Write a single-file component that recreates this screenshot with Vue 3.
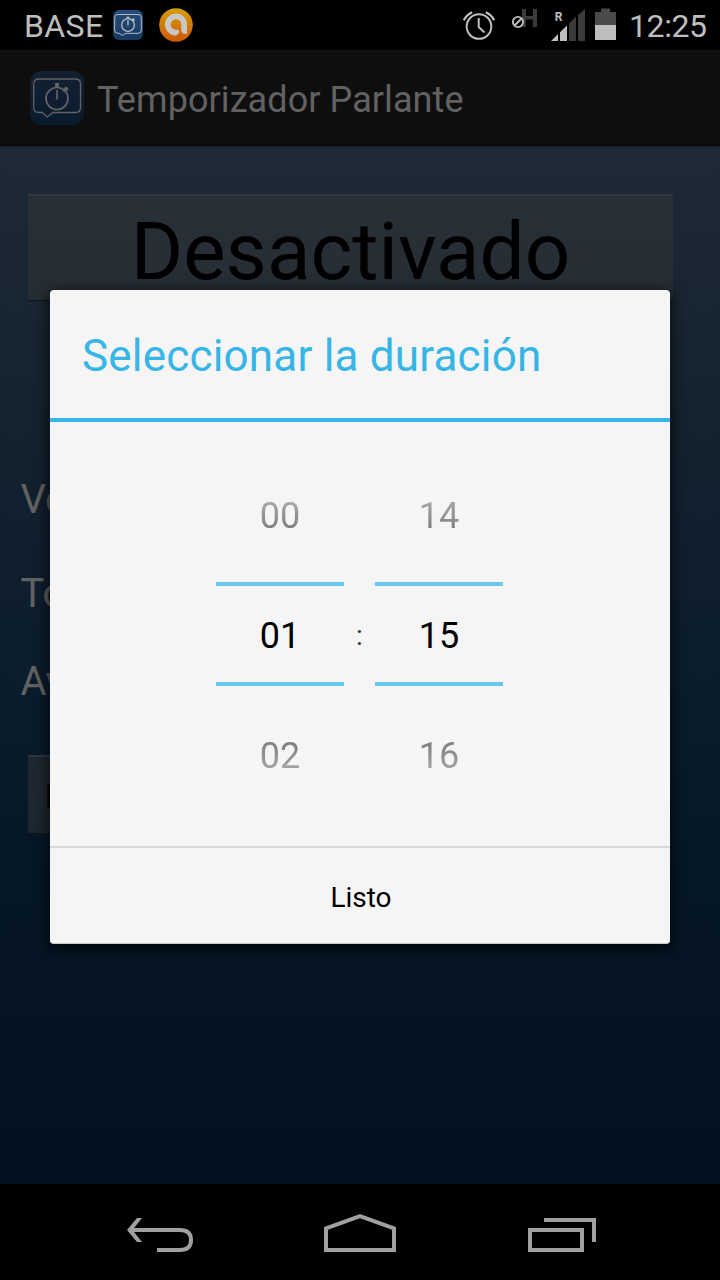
<script setup>
const settings = ['Vo', 'To', 'Av']
const wheels = [
  ['00', '01', '02'],
  ['14', '15', '16'],
]
</script>

<template>
  <div class="screen">
    <header class="status">
      <span class="carrier">BASE</span>
      <svg class="s-app" width="30" height="30" viewBox="0 0 54 54">
        <defs>
          <linearGradient id="blueS" x1="0" y1="0" x2="0" y2="1">
            <stop offset="0" stop-color="#264d77" />
            <stop offset="1" stop-color="#173a60" />
          </linearGradient>
        </defs>
        <rect width="54" height="54" rx="11" fill="url(#blueS)" />
        <g fill="none" stroke="#b3bcc5" stroke-width="1.8">
          <path d="M9 8H45Q51 8 51 14V36Q51 42 45 42H23L17 46L12 42H9Q3 42 3 36V14Q3 8 9 8Z" />
          <circle cx="27" cy="27" r="11.5" stroke-width="2.4" />
          <path d="M27 18V28" stroke-width="2.4" />
          <path d="M27 12V16" stroke-width="5" />
          <path d="M35 19L38 16" stroke-width="5" />
        </g>
      </svg>
      <svg class="s-avast" width="34" height="34" viewBox="0 0 34 34">
        <defs>
          <linearGradient id="orange" x1="0" y1="0" x2="0" y2="1">
            <stop offset="0" stop-color="#d7a000" />
            <stop offset="1" stop-color="#cd5700" />
          </linearGradient>
        </defs>
        <circle cx="17" cy="17" r="16.8" fill="url(#orange)" />
        <path d="M18.700 21.500A5.300 5.300 0 1 1 22.300 16.500V21.500Q22.300 25.700 26 25.700H28V16.500A11 11 0 1 0 16.500 27.500Q20.500 26 20 22.500Z" fill="#c8c8c8" />
      </svg>
      <span class="gap"></span>
      <svg class="s-right" width="173" height="50" viewBox="0 0 173 50">
        <g fill="none" stroke="#bebebe">
          <circle cx="23" cy="26.500" r="12.300" stroke-width="2" />
          <path d="M22.700 18V27L28.500 32.500" stroke-width="2" />
          <path d="M7.800 20.300Q10.500 14.800 16.200 12.200M38.200 20.300Q35.500 14.800 29.800 12.200" stroke-width="2.300" />
        </g>
        <path d="M66 9H70V16H77V9H81V27H77V19.500H70V27H66Z" fill="#3a3a3a" />
        <circle cx="62" cy="22" r="5.100" fill="#000" stroke="#bebebe" stroke-width="1.900" />
        <path d="M58.500 25.500L65.500 18.500" stroke="#bebebe" stroke-width="1.900" />
        <text x="98.700" y="21" class="roam">R</text>
        <path d="M95 41L102 34V41ZM104 32.200L111 25.500V41H104Z" fill="#bebebe" />
        <path d="M113 23.500L120 16.500V41H113ZM122 15L129 9V41H122Z" fill="#3a3a3a" />
        <path d="M139 12H145V8.500H154V12H160V25H139Z" fill="#4a4a4a" />
        <path d="M139 25H160V40H139Z" fill="#bebebe" />
      </svg>
      <span class="clock">12:25</span>
    </header>

    <div class="bar">
      <svg class="app-icon" width="54" height="54" viewBox="0 0 54 54">
        <defs>
          <linearGradient id="blueL" x1="0" y1="0" x2="0" y2="1">
            <stop offset="0" stop-color="#132131" />
            <stop offset="1" stop-color="#091b2f" />
          </linearGradient>
        </defs>
        <rect width="54" height="54" rx="12" fill="url(#blueL)" />
        <g fill="none" stroke="#626366">
          <path d="M9 8H45.500Q50.500 8 50.500 13V36.500Q50.500 41.500 45.500 41.500H23L17.300 46L12 41.500H9Q3.700 41.500 3.700 36.500V13Q3.700 8 9 8Z" stroke-width="1.300" />
          <circle cx="27" cy="27.500" r="11" stroke-width="1.700" />
          <path d="M27 19V28.500" stroke-width="1.700" />
          <path d="M27 12V16.500" stroke-width="4" />
          <path d="M33 20L36 18" stroke-width="2" />
          <circle cx="36.200" cy="18" r="1.800" fill="#626366" />
        </g>
      </svg>
      <h1>Temporizador Parlante</h1>
    </div>

    <main class="content">
      <div class="btn big"><span>Desactivado</span></div>
      <ul>
        <li v-for="s in settings" :key="s">{{ s }}</li>
      </ul>
      <div class="btn small">I</div>
    </main>

    <nav class="nav">
      <svg width="720" height="96" viewBox="0 0 720 96" fill="none" stroke="#a0a0a0" stroke-width="4">
        <path d="M129 46H180Q191 46 191 56Q191 66 180 66H157" />
        <path d="M127 46L137 34H142L132.500 46L142 58H137Z" fill="#a0a0a0" stroke="none" />
        <path d="M326 66V44.400L360 32.200L394 44.400V66Z" />
        <path d="M530 46H582V66H530ZM544 36H594V58" />
      </svg>
    </nav>

    <section class="dialog">
      <h2><span>Seleccionar la duración</span></h2>
      <div class="picker">
        <div v-for="(w, i) in wheels" :key="i" class="wheel">
          <span class="dim above">{{ w[0] }}</span>
          <span class="current">{{ w[1] }}</span>
          <span class="dim below">{{ w[2] }}</span>
        </div>
        <span class="colon">:</span>
      </div>
      <button>Listo</button>
    </section>
  </div>
</template>

<style>
body {
  margin: 0;
  background: #000;
}
</style>

<style scoped>
* {
  box-sizing: border-box;
}
.screen {
  position: relative;
  width: 720px;
  height: 1280px;
  display: grid;
  grid-template-rows: 50px 96px 1038px 96px;
  overflow: hidden;
  background: #000;
  font-family: Roboto, sans-serif;
}
.status {
  display: flex;
  align-items: center;
  color: #bebebe;
  font-size: 32px;
  padding-left: 24px;
}
.carrier {
  width: 89px;
  padding-top: 1px;
  letter-spacing: 0.4px;
}
.s-avast {
  margin-left: 16px;
}
.gap {
  flex: 1;
}
.clock {
  width: 91px;
  padding-top: 1px;
  letter-spacing: -0.4px;
  white-space: nowrap;
}
.roam {
  font: 700 12px Roboto, sans-serif;
  fill: #bebebe;
}
.bar {
  display: flex;
  align-items: center;
  background: #0e0e0e;
  border-top: 1px solid #151515;
  border-bottom: 3px solid #0a0a0a;
  padding: 2px 0 0 30px;
}
h1 {
  margin: 4px 0 0 13px;
  font-size: 36px;
  font-weight: 400;
  letter-spacing: 0.08px;
  color: #626262;
  white-space: nowrap;
}
.content {
  background: linear-gradient(#1e2a36 0%, #14222f 28%, #0c1d2d 48%, #061726 68%, #021120 100%);
  box-shadow: inset 0 3px 3px -2px #151f28;
  padding: 48px 0 0 28px;
}
.btn {
  color: #000;
  background: rgba(52, 54, 56, 0.5);
  border-radius: 2px;
  border-top: 2px solid #30383e;
  box-shadow: 0 1px 1px #10171d;
}
.big {
  width: 645px;
  height: 106px;
  font-size: 80px;
  line-height: 112px;
  text-align: center;
}
ul {
  list-style: none;
  margin: 154px 0 0 -7.5px;
  padding: 0;
  color: #626262;
  font-size: 40px;
  line-height: 91px;
}
li:nth-child(1) {
  height: 94px;
}
li:nth-child(2) {
  height: 88px;
}
li:nth-child(3) {
  height: 119px;
}
.small {
  width: 160px;
  height: 78px;
  padding-left: 17px;
  font-size: 34px;
  font-weight: 700;
  line-height: 78px;
}
.nav {
  background: #000;
}
.nav svg {
  display: block;
}
.dialog {
  position: absolute;
  left: 50px;
  top: 290px;
  width: 620px;
  height: 654px;
  display: grid;
  grid-template-rows: 132px 424px 98px;
  border-radius: 4px;
  overflow: hidden;
  background: #f5f5f5;
  border-bottom: 1px solid #c6ccd0;
  box-shadow: 0 3px 14px 3px rgba(0, 0, 0, 0.6);
}
h2 {
  margin: 0;
  padding-left: 32px;
  border-bottom: 4px solid #35b6e6;
  font-size: 44px;
  font-weight: 400;
  letter-spacing: 0.19px;
  line-height: 133px;
  color: #35b6e6;
}
.picker {
  position: relative;
  display: flex;
  justify-content: center;
  gap: 31px;
  padding-top: 34px;
  margin-left: -1px;
}
.wheel {
  width: 128px;
  display: grid;
  grid-template-rows: 126px 104px 126px;
  justify-items: center;
  font-size: 36px;
  color: #000;
}
.current {
  width: 100%;
  border-top: 4px solid #6cc8ea;
  border-bottom: 4px solid #6cc8ea;
  text-align: center;
  line-height: 101px;
}
.dim {
  color: transparent;
  background-clip: text;
  -webkit-background-clip: text;
  height: 42px;
  line-height: 42px;
}
.above {
  margin-top: 39px;
  background-image: linear-gradient(#b0b0b0, #747474);
}
.below {
  margin-top: 49px;
  background-image: linear-gradient(#747474, #b0b0b0);
}
.colon {
  position: absolute;
  left: 0;
  right: 0;
  top: 197px;
  text-align: center;
  font-size: 28px;
  color: #333;
}
button {
  border: 0;
  border-top: 2px solid #d8d8d8;
  background: #f5f5f5;
  font: 400 28px/97px Roboto, sans-serif;
  color: #000;
  padding: 1px 0 0 2px;
}
</style>
